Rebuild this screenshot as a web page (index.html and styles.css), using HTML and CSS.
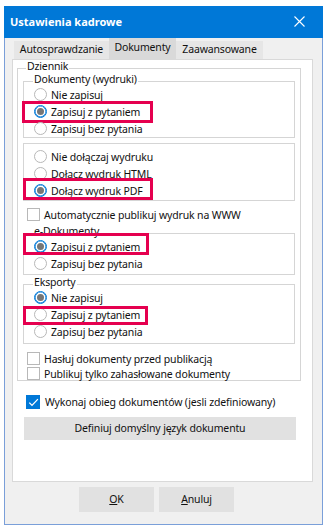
FILE: index.html
```html
<!DOCTYPE html>
<html lang="pl">
<head>
<meta charset="utf-8">
<title>Ustawienia kadrowe</title>
<link rel="stylesheet" href="styles.css">
</head>
<body>
<div class="window">
  <div class="titlebar">
    <span class="title">Ustawienia kadrowe</span>
    <svg class="close" width="11" height="11" viewBox="0 0 11 11"><path d="M0.5 0.5L10.5 10.5M10.5 0.5L0.5 10.5" stroke="#fff" stroke-width="1.1" fill="none"/></svg>
  </div>
  <div class="client">
    <div class="tabs">
      <div class="tab t1">Autosprawdzanie</div>
      <div class="tab t2 active">Dokumenty</div>
      <div class="tab t3">Zaawansowane</div>
    </div>
    <div class="panel">
      <div class="group g-dz">
        <div class="legend lg-dz">Dziennik</div>

        <div class="group g-in g-dok">
          <div class="legend">Dokumenty (wydruki)</div>
          <div class="row"><span class="rb"></span><span>Nie zapisuj</span></div>
          <div class="row hl hl1"><span class="rb on"></span><span>Zapisuj z pytaniem</span></div>
          <div class="row"><span class="rb"></span><span>Zapisuj bez pytania</span></div>
        </div>

        <div class="group g-in g-att">
          <div class="row"><span class="rb"></span><span>Nie dołączaj wydruku</span></div>
          <div class="row"><span class="rb"></span><span>Dołącz wydruk HTML</span></div>
          <div class="row hl hl2"><span class="rb on"></span><span>Dołącz wydruk PDF</span></div>
        </div>

        <div class="chkrow c-auto"><span class="cb"></span><span>Automatycznie publikuj wydruk na WWW</span></div>

        <div class="group g-in g-edok">
          <div class="legend">e-Dokumenty</div>
          <div class="row hl hl3"><span class="rb on"></span><span>Zapisuj z pytaniem</span></div>
          <div class="row"><span class="rb"></span><span>Zapisuj bez pytania</span></div>
        </div>

        <div class="group g-in g-eks">
          <div class="legend">Eksporty</div>
          <div class="row"><span class="rb on"></span><span>Nie zapisuj</span></div>
          <div class="row hl hl4"><span class="rb"></span><span>Zapisuj z pytaniem</span></div>
          <div class="row"><span class="rb"></span><span>Zapisuj bez pytania</span></div>
        </div>

        <div class="chkrow tight c-has"><span class="cb"></span><span>Hasłuj dokumenty przed publikacją</span></div>
        <div class="chkrow tight"><span class="cb"></span><span>Publikuj tylko zahasłowane dokumenty</span></div>
      </div>

      <div class="chkrow c-wyk"><span class="cb on"><svg width="13" height="13" viewBox="0 0 13 13"><path d="M2.3 6.6L5 9.4L10.9 3.1" stroke="#fff" stroke-width="1.3" fill="none"/></svg></span><span>Wykonaj obieg dokumentów (jesli zdefiniowany)</span></div>

      <div class="btn wide">Definiuj domyślny język dokumentu</div>
    </div>
    <div class="buttons">
      <div class="btn dlg"><u>O</u>K</div>
      <div class="btn dlg"><u>A</u>nuluj</div>
    </div>
  </div>
</div>
</body>
</html>
```

FILE: styles.css
```css
html, body {
  margin: 0;
  background: #ffffff;
}
body {
  font-family: "Noto Sans", "Open Sans", sans-serif;
  font-size: 10.5px;
  letter-spacing: -0.15px;
  color: #111111;
}
.window {
  margin: 6px 0 0 4px;
  width: 319px;
  height: 519px;
  box-sizing: border-box;
  border: 1px solid #7a9fd9;
  border-top: 0;
  background: #f0f0f0;
  display: flex;
  flex-direction: column;
}
.titlebar {
  margin: 0 -1px;
  height: 32px;
  background: #0078d7;
  display: flex;
  align-items: center;
  justify-content: space-between;
  padding: 0 18px 0 6px;
}
.title {
  color: #ffffff;
  font-weight: 700;
  font-size: 11px;
  letter-spacing: 0;
  line-height: 32px;
}
.close {
  display: block;
  margin-top: -1px;
}
.client {
  flex: 1;
}
.tabs {
  display: flex;
  align-items: flex-end;
  height: 21px;
  padding-left: 9px;
}
.tab {
  height: 18px;
  box-sizing: border-box;
  padding-top: 1px;
  line-height: 15px;
  text-align: center;
  background: #e6e6e6;
  color: #111;
}
.tab.active {
  height: 21px;
  padding-top: 2px;
  background: #d9d9d9;
}
.t1 { width: 95px; }
.t2 { width: 67px; }
.t3 { width: 87px; }

.panel {
  margin-left: 7px;
  width: 301px;
  height: 423px;
  box-sizing: border-box;
  border: 1px solid #d9d9d9;
  background: #ffffff;
  padding-top: 8px;
}
.group {
  box-sizing: border-box;
  border: 1px solid #d5d5d5;
}
.g-dz {
  margin-left: 4px;
  width: 284px;
  height: 313px;
}
.legend {
  width: max-content;
  margin: -9px 0 0 9px;
  padding: 0 1px;
  background: #ffffff;
  line-height: 13px;
}
.lg-dz {
  margin-left: 8px;
}
.g-in {
  margin-left: 5px;
  width: 272px;
}
.g-dok { margin-top: 8px; }
.g-att { margin-top: 5px; padding: 4px 0 1px; }
.g-edok { margin-top: 10px; padding-bottom: 2px; }
.g-eks { margin-top: 9px; padding-bottom: 3px; }

.row {
  display: flex;
  align-items: center;
  gap: 4px;
  height: 17px;
  padding-left: 10px;
  position: relative;
}
.rb {
  flex: none;
  width: 13px;
  height: 13px;
  box-sizing: border-box;
  border: 1px solid #b8b8b8;
  border-radius: 50%;
  background: #ffffff;
}
.rb.on {
  border-color: #0078d7;
  box-shadow: inset 0 0 0 0.6px #0078d7;
  display: grid;
  place-items: center;
}
.rb.on::after {
  content: "";
  width: 7px;
  height: 7px;
  border-radius: 50%;
  background: #767676;
}

.hl::after {
  content: "";
  position: absolute;
  box-sizing: border-box;
  border: 3px solid #e5004f;
  pointer-events: none;
}
.hl1::after { left: -2px; top: -2px; width: 131px; height: 22px; }
.hl2::after { left: -1px; top: -4px; width: 130px; height: 22px; }
.hl3::after { left: -1px; top: -5px; width: 126px; height: 22px; }
.hl4::after { left: -1px; top: 0; width: 125px; height: 19px; }

.chkrow {
  display: flex;
  align-items: center;
  gap: 4px;
  height: 17px;
  padding-left: 9px;
}
.chkrow.tight { height: 15px; }
.c-auto { margin-top: 5px; }
.c-has { margin-top: 7px; }
.c-wyk {
  margin-top: 12px;
  padding-left: 13px;
  gap: 5px;
}
.cb {
  flex: none;
  width: 13px;
  height: 13px;
  box-sizing: border-box;
  border: 1px solid #b8b8b8;
  background: #ffffff;
}
.cb.on {
  width: 14px;
  height: 14px;
  border-color: #0078d7;
  background: #0078d7;
  display: grid;
  place-items: center;
}
.cb.on svg { display: block; }

.btn {
  background: #e1e1e1;
  color: #111;
  text-align: center;
  box-sizing: border-box;
}
.btn.wide {
  margin: 7px 0 0 11px;
  width: 272px;
  height: 23px;
  line-height: 23px;
}
.buttons {
  display: flex;
  gap: 5px;
  margin-top: 5px;
  padding-left: 74px;
}
.btn.dlg {
  width: 75px;
  height: 25px;
  line-height: 25px;
}
.btn u {
  text-decoration-thickness: 1px;
  text-underline-offset: 1px;
}
```
